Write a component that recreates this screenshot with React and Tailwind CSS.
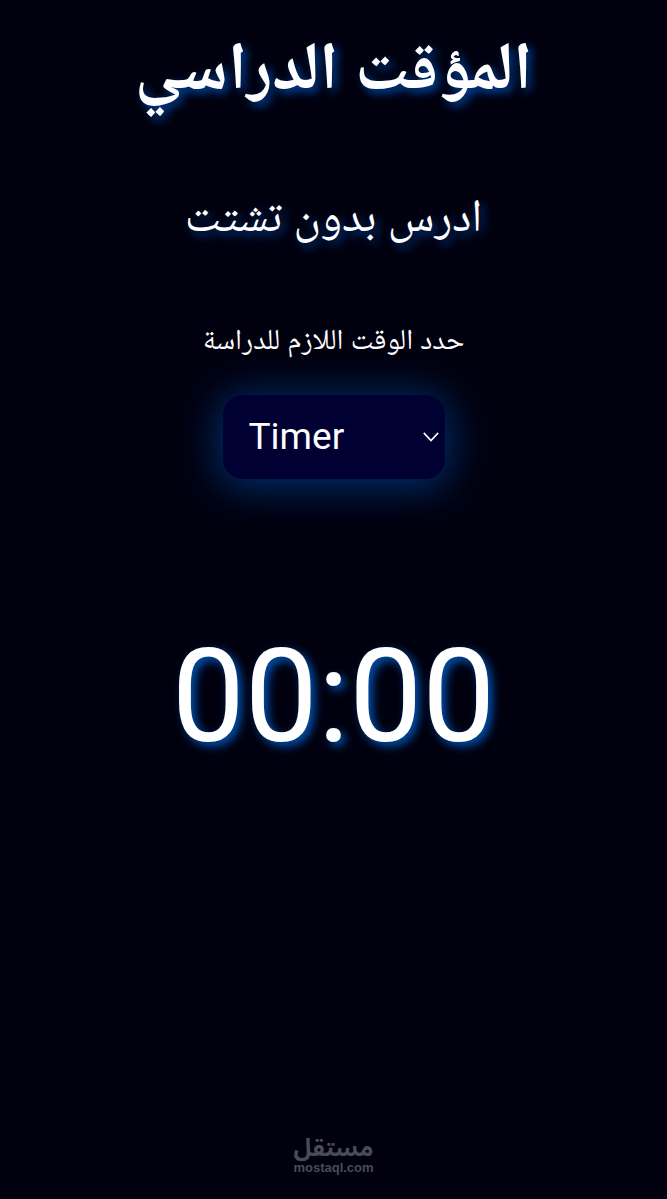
import { useState } from 'react';

const OPTIONS = [
  { value: '0', label: 'Timer' },
  { value: '25', label: '25:00' },
  { value: '45', label: '45:00' },
  { value: '60', label: '60:00' },
];

function DurationSelect({ value, onChange }) {
  return (
    <div dir="ltr" className="relative w-[222px] max-w-full">
      <select
        id="duration"
        value={value}
        onChange={(e) => onChange(e.target.value)}
        className="h-[84px] w-full appearance-none rounded-[20px] bg-[#000033] pl-[26px] pr-8 text-[37px] text-white shadow-[0_4px_40px_4px_#003070] outline-none"
      >
        {OPTIONS.map((o) => (
          <option key={o.value} value={o.value}>
            {o.label}
          </option>
        ))}
      </select>
      <svg
        aria-hidden="true"
        viewBox="0 0 16 10"
        className="pointer-events-none absolute right-1.5 top-1/2 h-[10px] w-4 -translate-y-1/2"
        fill="none"
        stroke="white"
        strokeWidth="1.6"
      >
        <path d="M0.8 0.9 8 8.5 15.2 0.9" />
      </svg>
    </div>
  );
}

export default function App() {
  const [minutes, setMinutes] = useState('0');
  return (
    <div
      dir="rtl"
      lang="ar"
      className="flex min-h-screen flex-col items-center bg-[#00000f] text-center font-['Roboto','Noto_Naskh_Arabic_UI','Noto_Naskh_Arabic','DejaVu_Sans',sans-serif] text-white"
    >
      <main className="flex w-full flex-1 flex-col items-center pt-[33px]">
        <h1 className="text-[67px] font-bold leading-[84px] [text-shadow:4px_4px_10px_#004aa8]">
          المؤقت الدراسي
        </h1>
        <h2 className="mt-[74px] text-[46px] leading-[60px] [text-shadow:4px_4px_10px_#004298]">
          ادرس بدون تشتت
        </h2>
        <label htmlFor="duration" className="mt-[72px] text-[29px] leading-[40px]">
          حدد الوقت اللازم للدراسة
        </label>
        <div className="mt-8">
          <DurationSelect value={minutes} onChange={setMinutes} />
        </div>
        <p dir="ltr" className="mt-[142px] text-[130px] leading-[152px] [text-shadow:4px_4px_10px_#0056b8]">
          {minutes.padStart(2, '0')}:00
        </p>
      </main>
      <footer className="flex flex-col items-center pb-6 text-[#4b4b57]">
        <span className="font-['Noto_Sans_Arabic','DejaVu_Sans',sans-serif] text-[24px] font-bold leading-[24px]">
          مستقل
        </span>
        <a
          href="#"
          dir="ltr"
          className="font-['Liberation_Sans',sans-serif] text-[13px] font-bold leading-[14px]"
        >
          mostaql.com
        </a>
      </footer>
    </div>
  );
}
